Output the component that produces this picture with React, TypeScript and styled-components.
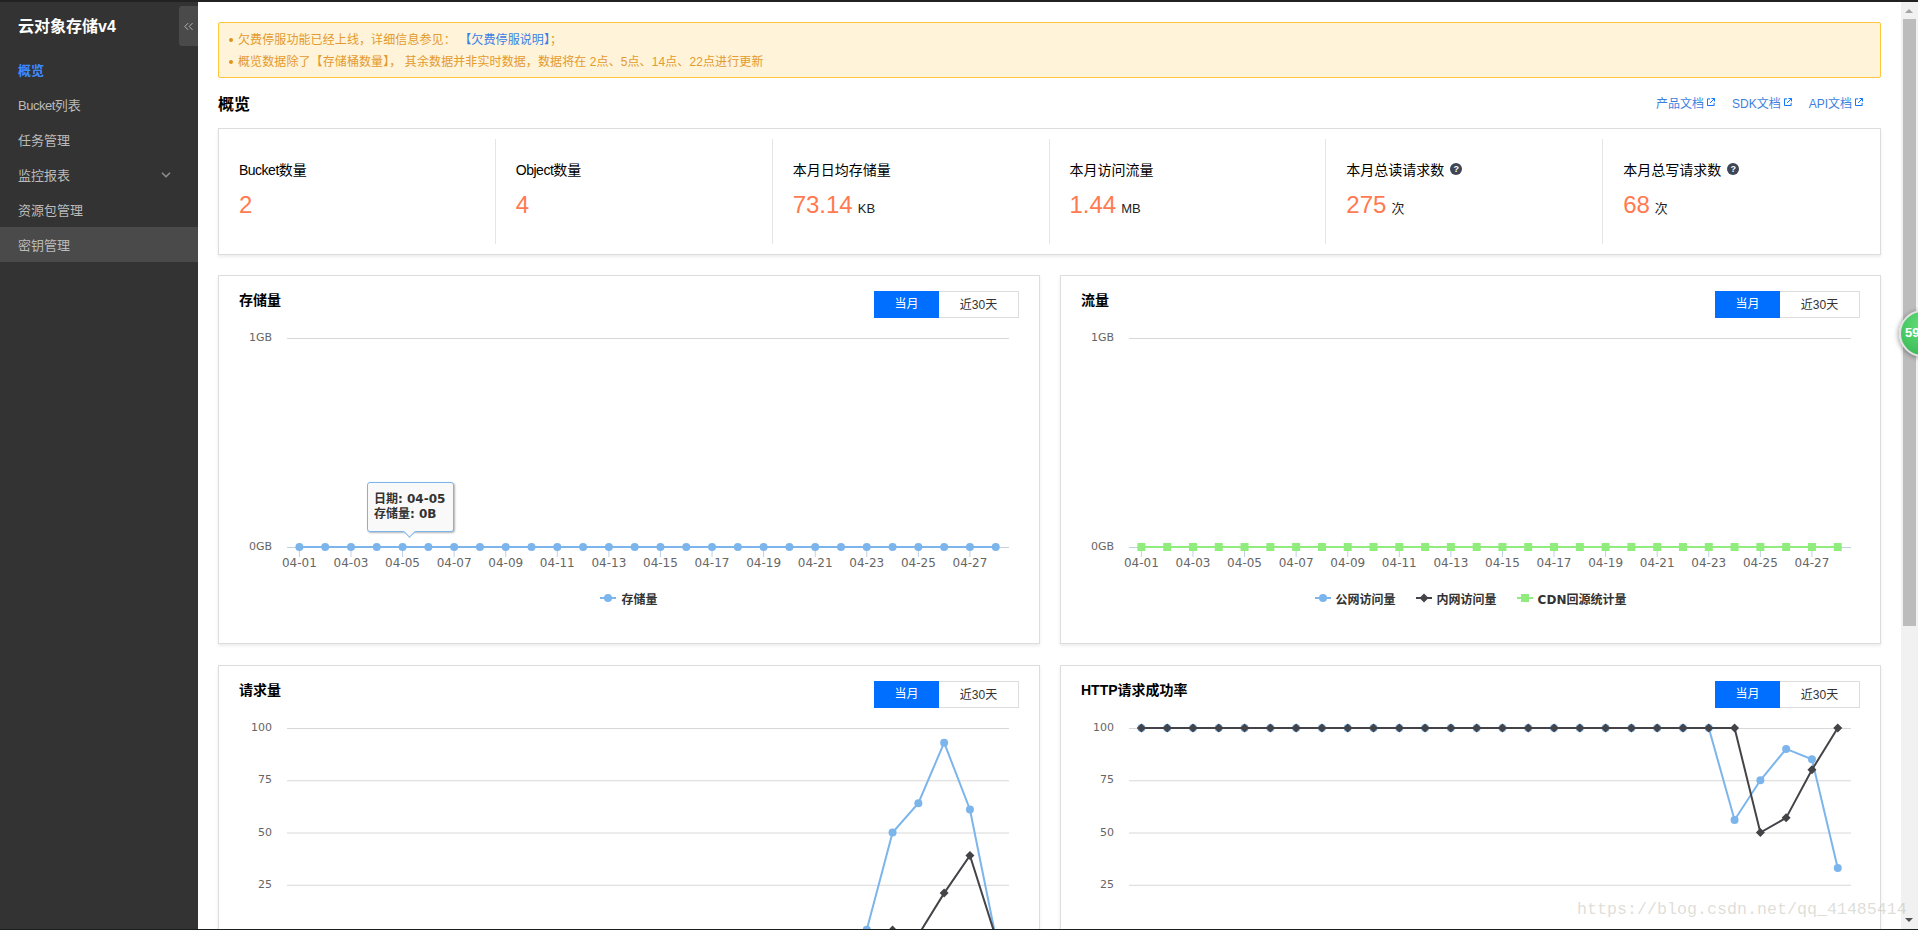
import React from 'react';
import styled, { createGlobalStyle } from 'styled-components';
import { ChevronsLeft, ChevronDown } from 'lucide-react';

const GlobalStyle = createGlobalStyle`
  html, body { margin: 0; padding: 0; height: 100%; overflow: hidden; background: #fff; }
  body { font-family: "Liberation Sans", "Noto Sans CJK SC", sans-serif; color: #000; }
  * { box-sizing: border-box; }
`;

const Page = styled.div`
  position: relative;
  height: 930px;
  display: flex;
  flex-direction: column;
  overflow: hidden;
`;
const TopEdge = styled.div`
  height: 2px;
  flex: none;
  background: #222;
`;
const BottomEdge = styled.div`
  height: 1px;
  flex: none;
  background: #16211f;
`;
const Body = styled.div`
  flex: 1;
  min-height: 0;
  display: flex;
`;

const Sidebar = styled.aside`
  position: relative;
  width: 198px;
  flex: none;
  background: #333;
`;
const Brand = styled.div`
  height: 50px;
  padding-left: 18px;
  line-height: 50px;
  font-size: 16px;
  font-weight: 700;
  color: #fff;
`;
const Collapse = styled.div`
  position: absolute;
  top: 4px;
  right: 0;
  width: 19px;
  height: 40px;
  display: flex;
  align-items: center;
  justify-content: center;
  background: #4a4a4a;
  border-radius: 3px 0 0 3px;
  color: #bbb;
`;
const NavItem = styled.div<{ $active?: boolean; $hover?: boolean }>`
  height: 35px;
  padding: 0 25px 0 18px;
  display: flex;
  align-items: center;
  justify-content: space-between;
  font-size: 13px;
  font-weight: ${(p) => (p.$active ? 700 : 400)};
  color: ${(p) => (p.$active ? '#3f8cff' : '#bbb')};
  background: ${(p) => (p.$hover ? '#4a4a4a' : 'transparent')};
`;
const Narrow = styled.span`
  letter-spacing: -0.5px;
`;

const Content = styled.main`
  flex: 1;
  min-width: 0;
  padding: 20px 20px 0;
  overflow: hidden;
`;
const Alert = styled.div`
  height: 56px;
  padding: 6px 8px 0 19px;
  background: #fff3d9;
  border: 1px solid #ffc53d;
  border-radius: 2px;
  font-size: 12px;
  line-height: 22px;
  letter-spacing: 0.1px;
  color: #e39a2e;
`;
const AlertLine = styled.div`
  position: relative;
  &::before {
    content: '';
    position: absolute;
    left: -9px;
    top: 9px;
    width: 4px;
    height: 4px;
    border-radius: 50%;
    background: #e0941f;
  }
`;
const AlertLink = styled.span`
  color: #3a7fe6;
`;
const SectionHead = styled.div`
  height: 50px;
  display: flex;
  align-items: center;
  justify-content: space-between;
  padding-right: 18px;
`;
const SectionTitle = styled.h2`
  margin: 0;
  font-size: 16px;
  font-weight: 700;
  color: #000;
`;
const DocLinks = styled.div`
  margin-top: -2px;
  display: flex;
  gap: 17px;
`;
const DocLink = styled.a`
  display: flex;
  align-items: center;
  gap: 3px;
  font-size: 12px;
  color: #3d7fe0;
  text-decoration: none;
`;

const StatsCard = styled.section`
  height: 127px;
  padding: 10px 0;
  display: grid;
  grid-template-columns: repeat(6, 1fr);
  border: 1px solid #ddd;
  box-shadow: 0 2px 3px rgba(0, 0, 0, 0.08);
`;
const Stat = styled.div`
  padding: 20px 0 0 20px;
  border-right: 1px solid #e5e5e5;
  &:last-child { border-right: none; }
`;
const StatLabel = styled.div`
  display: flex;
  align-items: center;
  gap: 6px;
  height: 20px;
  font-size: 14px;
  color: #000;
`;
const Help = styled.span`
  width: 12px;
  height: 12px;
  border-radius: 50%;
  background: #3d4654;
  color: #fff;
  font-size: 9px;
  font-weight: 700;
  line-height: 12px;
  text-align: center;
`;
const StatValue = styled.div`
  margin-top: 10px;
  height: 32px;
  line-height: 32px;
  font-size: 24px;
  color: #ff7a50;
`;
const StatUnit = styled.span`
  margin-left: 5px;
  font-size: 13px;
  color: #222;
`;

const ChartGrid = styled.div`
  margin-top: 20px;
  display: grid;
  grid-template-columns: 822px 821px;
  column-gap: 20px;
  row-gap: 21px;
`;
const Card = styled.section`
  height: 369px;
  border: 1px solid #ddd;
  box-shadow: 0 2px 3px rgba(0, 0, 0, 0.08);
`;
const CardHead = styled.div`
  padding: 14px 20px 0;
  display: flex;
  align-items: flex-start;
  justify-content: space-between;
`;
const CardTitle = styled.h3`
  margin: 0;
  font-size: 14px;
  line-height: 20px;
  font-weight: 700;
  color: #000;
`;
const Tabs = styled.div`
  margin-top: 1px;
  display: flex;
`;
const Tab = styled.div<{ $active?: boolean }>`
  width: ${(p) => (p.$active ? '65px' : '80px')};
  height: 27px;
  line-height: ${(p) => (p.$active ? '27px' : '26px')};
  text-align: center;
  font-size: 12px;
  color: ${(p) => (p.$active ? '#fff' : '#333')};
  background: ${(p) => (p.$active ? '#006eff' : '#fff')};
  border: ${(p) => (p.$active ? 'none' : '1px solid #ddd')};
  border-left: none;
`;
const ChartWrap = styled.div`
  position: relative;
  margin-top: 4px;
  height: 262px;
`;
const ChartSvg = styled.svg`
  display: block;
`;
const AxisText = styled.text<{ $size: number }>`
  font-family: "DejaVu Sans", sans-serif;
  font-size: ${(p) => p.$size}px;
  fill: #666;
`;
const Tooltip = styled.div`
  position: absolute;
  left: 148px;
  top: 160px;
  width: 87px;
  height: 50px;
  padding: 9px 0 0 6px;
  background: #f9f9f9;
  border: 1px solid #7cb5ec;
  border-radius: 3px;
  box-shadow: 1px 1px 2px rgba(0, 0, 0, 0.3);
  font-family: "DejaVu Sans", "Noto Sans CJK SC", sans-serif;
  font-size: 12px;
  font-weight: 700;
  line-height: 15px;
  color: #333;
  white-space: nowrap;
  &::after {
    content: '';
    position: absolute;
    left: 37px;
    bottom: -5px;
    width: 8px;
    height: 8px;
    background: #f9f9f9;
    border-right: 1px solid #7cb5ec;
    border-bottom: 1px solid #7cb5ec;
    transform: rotate(45deg);
  }
`;
const Legend = styled.div`
  margin-top: 6px;
  display: flex;
  justify-content: center;
  gap: 20px;
`;
const LegendItem = styled.div`
  display: flex;
  align-items: center;
  gap: 5px;
  height: 16px;
  font-family: "DejaVu Sans", "Noto Sans CJK SC", sans-serif;
  font-size: 12px;
  font-weight: 700;
  color: #333;
`;

const ScrollTrack = styled.div`
  position: relative;
  width: 17px;
  flex: none;
  background: #f1f1f1;
`;
const ScrollThumb = styled.div`
  position: absolute;
  top: 17px;
  left: 2px;
  width: 13px;
  height: 607px;
  background: #bcbcbc;
`;
const ScrollArrow = styled.div<{ $down?: boolean }>`
  position: absolute;
  left: 4px;
  ${(p) => (p.$down ? 'bottom: 7px;' : 'top: 7px;')}
  width: 0;
  height: 0;
  border-left: 4px solid transparent;
  border-right: 4px solid transparent;
  ${(p) => (p.$down ? 'border-top: 4px solid #505050;' : 'border-bottom: 4px solid #a3a3a3;')}
`;
const Watermark = styled.div`
  position: absolute;
  left: 1577px;
  top: 900px;
  font-family: "Liberation Mono", monospace;
  font-size: 16.67px;
  line-height: 20px;
  color: rgba(170, 170, 155, 0.4);
  white-space: nowrap;
  pointer-events: none;
`;
const Ball = styled.div`
  position: absolute;
  left: 1899px;
  top: 310px;
  width: 47px;
  height: 47px;
  padding: 13px 0 0 4px;
  border: 2px solid #e2e2e2;
  border-radius: 50%;
  background: radial-gradient(circle at 50% 30%, #62de78, #34b552);
  box-shadow: -1px 1px 5px rgba(0, 0, 0, 0.35);
  font-size: 13px;
  font-weight: 700;
  line-height: 16px;
  color: #fff;
`;

type Shape = 'circle' | 'diamond' | 'square';
type Series = { name: string; color: string; shape: Shape; data: number[] };

const BLUE = '#7cb5ec';
const DARK = '#434348';
const GREEN = '#90ed7d';
const X0 = 80.4;
const STEP = 25.79;
const TOP = 16;
const BOTTOM = 225;
const dates = Array.from({ length: 28 }, (_, i) => `04-${String(i + 1).padStart(2, '0')}`);
const fill = (n: number, v: number) => Array.from({ length: n }, () => v);

const Marker = ({ shape, color, x, y }: { shape: Shape; color: string; x: number; y: number }) => {
  if (shape === 'circle') return <circle cx={x} cy={y} r={4} fill={color} />;
  if (shape === 'square') return <rect x={x - 4} y={y - 4} width={8} height={8} fill={color} />;
  return <path d={`M${x} ${y - 4.5}L${x + 4.5} ${y}L${x} ${y + 4.5}L${x - 4.5} ${y}Z`} fill={color} />;
};

const LegendMark = ({ shape, color }: { shape: Shape; color: string }) => (
  <svg width="16" height="12" viewBox="0 0 16 12">
    <path d="M0 6H16" stroke={color} strokeWidth="2" />
    <Marker shape={shape} color={color} x={8} y={6} />
  </svg>
);

const Chart = ({
  ticks,
  max,
  series,
  legend,
  tooltip,
}: {
  ticks: { label: string; value: number }[];
  max: number;
  series: Series[];
  legend: Series[];
  tooltip?: boolean;
}) => {
  const yOf = (v: number) => BOTTOM - (v / max) * (BOTTOM - TOP);
  return (
    <>
      <ChartWrap>
        <ChartSvg width="820" height="262" viewBox="0 0 820 262">
          {ticks.map((t) => (
            <g key={t.label}>
              <path
                d={`M68 ${yOf(t.value) + 0.5}H790`}
                stroke={t.value === 0 ? '#c0d0e0' : '#d8d8d8'}
                strokeWidth="1"
              />
              <AxisText $size={11} x={53} y={yOf(t.value) + 3} textAnchor="end">
                {t.label}
              </AxisText>
            </g>
          ))}
          {dates.map((d, i) =>
            i % 2 === 0 ? (
              <g key={d}>
                <path d={`M${X0 + STEP * i} 225V235`} stroke="#c0d0e0" strokeWidth="1" />
                <AxisText $size={12} x={X0 + STEP * i} y={245} textAnchor="middle">
                  {d}
                </AxisText>
              </g>
            ) : null,
          )}
          {series.map((s) => (
            <g key={s.name}>
              <polyline
                points={s.data.map((v, i) => `${X0 + STEP * i},${yOf(v)}`).join(' ')}
                fill="none"
                stroke={s.color}
                strokeWidth="2"
              />
              {s.data.map((v, i) => (
                <Marker key={i} shape={s.shape} color={s.color} x={X0 + STEP * i} y={yOf(v)} />
              ))}
            </g>
          ))}
        </ChartSvg>
        {tooltip && (
          <Tooltip>
            日期: 04-05
            <br />
            存储量: 0B
          </Tooltip>
        )}
      </ChartWrap>
      <Legend>
        {legend.map((s) => (
          <LegendItem key={s.name}>
            <LegendMark shape={s.shape} color={s.color} />
            {s.name}
          </LegendItem>
        ))}
      </Legend>
    </>
  );
};

const ChartCard = ({ title, children }: { title: string; children: React.ReactNode }) => (
  <Card>
    <CardHead>
      <CardTitle>{title}</CardTitle>
      <Tabs>
        <Tab $active>当月</Tab>
        <Tab>近30天</Tab>
      </Tabs>
    </CardHead>
    {children}
  </Card>
);

const ExternalIcon = () => (
  <svg width="8" height="8" viewBox="0 0 9 9" fill="none" stroke="#006eff" strokeWidth="1.1">
    <path d="M3.5 1H.5V8.5H8V5.5" />
    <path d="M3.5 5.5L8 1M5 .5H8.5V4" />
  </svg>
);

const LatinNarrow = ({ text }: { text: string }) => {
  const m = text.match(/^([A-Za-z]+)(.*)$/);
  return m ? (
    <span>
      <Narrow>{m[1]}</Narrow>
      {m[2]}
    </span>
  ) : (
    <span>{text}</span>
  );
};

const stats = [
  { label: 'Bucket数量', value: '2' },
  { label: 'Object数量', value: '4' },
  { label: '本月日均存储量', value: '73.14', unit: 'KB' },
  { label: '本月访问流量', value: '1.44', unit: 'MB' },
  { label: '本月总读请求数', value: '275', unit: '次', help: true },
  { label: '本月总写请求数', value: '68', unit: '次', help: true },
];
const nav = ['概览', 'Bucket列表', '任务管理', '监控报表', '资源包管理', '密钥管理'];
const gbTicks = [
  { label: '1GB', value: 1 },
  { label: '0GB', value: 0 },
];
const pctTicks = [100, 75, 50, 25, 0].map((v) => ({ label: String(v), value: v }));

const storage: Series[] = [{ name: '存储量', color: BLUE, shape: 'circle', data: fill(28, 0) }];
const trafficLegend: Series[] = [
  { name: '公网访问量', color: BLUE, shape: 'circle', data: fill(28, 0) },
  { name: '内网访问量', color: DARK, shape: 'diamond', data: fill(28, 0) },
  { name: 'CDN回源统计量', color: GREEN, shape: 'square', data: fill(28, 0) },
];
const requests: Series[] = [
  { name: '公网访问量', color: BLUE, shape: 'circle', data: [...fill(22, 0), 3.5, 50, 64, 93, 61, 0] },
  { name: '内网访问量', color: DARK, shape: 'diamond', data: [...fill(23, 0), 3.3, 1, 21, 39, 0] },
];
const success: Series[] = [
  { name: '公网访问量', color: BLUE, shape: 'circle', data: [...fill(23, 100), 56, 75, 90, 85, 33] },
  { name: '内网访问量', color: DARK, shape: 'diamond', data: [...fill(24, 100), 50, 57, 80, 100] },
];

export default function App() {
  return (
    <Page>
      <GlobalStyle />
      <TopEdge />
      <Body>
        <Sidebar>
          <Brand>云对象存储v4</Brand>
          <Collapse>
            <ChevronsLeft size={15} strokeWidth={1.5} />
          </Collapse>
          {nav.map((n, i) => (
            <NavItem key={n} $active={i === 0} $hover={i === 5}>
              <LatinNarrow text={n} />
              {i === 3 && <ChevronDown size={14} strokeWidth={3} color="#8a8a8a" />}
            </NavItem>
          ))}
        </Sidebar>
        <Content>
          <Alert>
            <AlertLine>
              欠费停服功能已经上线，详细信息参见： <AlertLink>【欠费停服说明】</AlertLink>；
            </AlertLine>
            <AlertLine>概览数据除了【存储桶数量】， 其余数据并非实时数据，数据将在 2点、5点、14点、22点进行更新</AlertLine>
          </Alert>
          <SectionHead>
            <SectionTitle>概览</SectionTitle>
            <DocLinks>
              {['产品文档', 'SDK文档', 'API文档'].map((d) => (
                <DocLink key={d}>
                  {d}
                  <ExternalIcon />
                </DocLink>
              ))}
            </DocLinks>
          </SectionHead>
          <StatsCard>
            {stats.map((s) => (
              <Stat key={s.label}>
                <StatLabel>
                  <LatinNarrow text={s.label} />
                  {s.help && <Help>?</Help>}
                </StatLabel>
                <StatValue>
                  {s.value}
                  {s.unit && <StatUnit>{s.unit}</StatUnit>}
                </StatValue>
              </Stat>
            ))}
          </StatsCard>
          <ChartGrid>
            <ChartCard title="存储量">
              <Chart ticks={gbTicks} max={1} series={storage} legend={storage} tooltip />
            </ChartCard>
            <ChartCard title="流量">
              <Chart ticks={gbTicks} max={1} series={[trafficLegend[2]]} legend={trafficLegend} />
            </ChartCard>
            <ChartCard title="请求量">
              <Chart ticks={pctTicks} max={100} series={requests} legend={requests} />
            </ChartCard>
            <ChartCard title="HTTP请求成功率">
              <Chart ticks={pctTicks} max={100} series={success} legend={success} />
            </ChartCard>
          </ChartGrid>
        </Content>
        <ScrollTrack>
          <ScrollArrow />
          <ScrollThumb />
          <ScrollArrow $down />
        </ScrollTrack>
      </Body>
      <BottomEdge />
      <Watermark>https://blog.csdn.net/qq_41485414</Watermark>
      <Ball>59</Ball>
    </Page>
  );
}
